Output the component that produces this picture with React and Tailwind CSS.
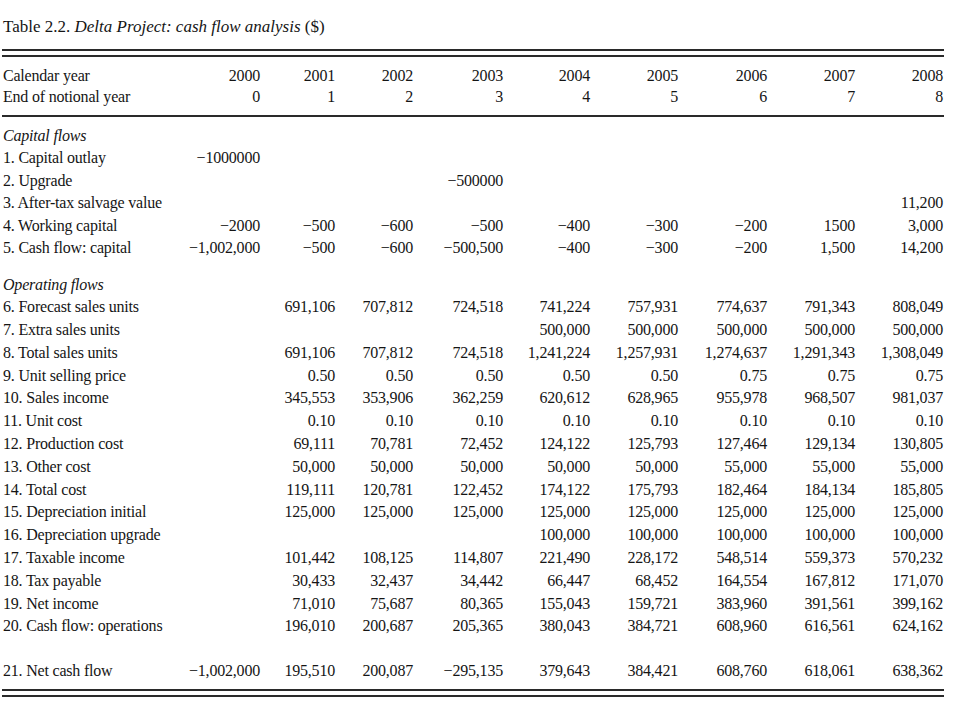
import React from 'react';

const cols = "grid grid-cols-[177px_80px_75px_78px_90px_87px_88px_89px_88px_88px]";

const capital = [
  ["1. Capital outlay", "−1000000", "", "", "", "", "", "", "", ""],
  ["2. Upgrade", "", "", "", "−500000", "", "", "", "", ""],
  ["3. After-tax salvage value", "", "", "", "", "", "", "", "", "11,200"],
  ["4. Working capital", "−2000", "−500", "−600", "−500", "−400", "−300", "−200", "1500", "3,000"],
  ["5. Cash flow: capital", "−1,002,000", "−500", "−600", "−500,500", "−400", "−300", "−200", "1,500", "14,200"],
];

const operating = [
  ["6. Forecast sales units", "", "691,106", "707,812", "724,518", "741,224", "757,931", "774,637", "791,343", "808,049"],
  ["7. Extra sales units", "", "", "", "", "500,000", "500,000", "500,000", "500,000", "500,000"],
  ["8. Total sales units", "", "691,106", "707,812", "724,518", "1,241,224", "1,257,931", "1,274,637", "1,291,343", "1,308,049"],
  ["9. Unit selling price", "", "0.50", "0.50", "0.50", "0.50", "0.50", "0.75", "0.75", "0.75"],
  ["10. Sales income", "", "345,553", "353,906", "362,259", "620,612", "628,965", "955,978", "968,507", "981,037"],
  ["11. Unit cost", "", "0.10", "0.10", "0.10", "0.10", "0.10", "0.10", "0.10", "0.10"],
  ["12. Production cost", "", "69,111", "70,781", "72,452", "124,122", "125,793", "127,464", "129,134", "130,805"],
  ["13. Other cost", "", "50,000", "50,000", "50,000", "50,000", "50,000", "55,000", "55,000", "55,000"],
  ["14. Total cost", "", "119,111", "120,781", "122,452", "174,122", "175,793", "182,464", "184,134", "185,805"],
  ["15. Depreciation initial", "", "125,000", "125,000", "125,000", "125,000", "125,000", "125,000", "125,000", "125,000"],
  ["16. Depreciation upgrade", "", "", "", "", "100,000", "100,000", "100,000", "100,000", "100,000"],
  ["17. Taxable income", "", "101,442", "108,125", "114,807", "221,490", "228,172", "548,514", "559,373", "570,232"],
  ["18. Tax payable", "", "30,433", "32,437", "34,442", "66,447", "68,452", "164,554", "167,812", "171,070"],
  ["19. Net income", "", "71,010", "75,687", "80,365", "155,043", "159,721", "383,960", "391,561", "399,162"],
  ["20. Cash flow: operations", "", "196,010", "200,687", "205,365", "380,043", "384,721", "608,960", "616,561", "624,162"],
];

const net = ["21. Net cash flow", "−1,002,000", "195,510", "200,087", "−295,135", "379,643", "384,421", "608,760", "618,061", "638,362"];

const Row = ({ cells, h }) => (
  <div className={`${cols} ${h}`}>
    {cells.map((c, i) => (
      <div key={i} className={i === 0 ? "text-left whitespace-nowrap" : "text-right whitespace-nowrap"}>{c}</div>
    ))}
  </div>
);

export default function App() {
  return (
    <div className="w-[960px] h-[720px] bg-white text-[#151515] font-['Liberation_Serif',serif] pl-[3px] pt-[16px]">
      <div className="leading-[22px] h-[22px] text-[17px]">
        Table 2.2. <span className="italic">Delta Project: cash flow analysis</span> ($)
      </div>

      <div className="text-[16px] tracking-[-0.2px]">
        <div className="w-[942px] -ml-[1px] mt-[11px] border-t-2 border-[#2a2a2a]" />
        <div className="w-[942px] -ml-[1px] mt-[4px] border-t-2 border-[#2a2a2a]" />

        <div className="mt-[8px] leading-[21px]">
          <Row h="h-[21px]" cells={["Calendar year", "2000", "2001", "2002", "2003", "2004", "2005", "2006", "2007", "2008"]} />
          <Row h="h-[21px]" cells={["End of notional year", "0", "1", "2", "3", "4", "5", "6", "7", "8"]} />
        </div>

        <div className="w-[942px] -ml-[1px] mt-[8px] border-t-2 border-[#2a2a2a]" />

        <div className="mt-[8px] leading-[22.5px]">
          <div className="italic h-[22px] leading-[22px]">Capital flows</div>
          {capital.map((r, i) => <Row key={i} h="h-[22.5px]" cells={r} />)}
        </div>

        <div className="mt-[14px] leading-[22.8px]">
          <div className="italic h-[22.8px]">Operating flows</div>
          {operating.map((r, i) => <Row key={i} h="h-[22.8px]" cells={r} />)}
        </div>

        <div className="mt-[22px] leading-[22.8px]">
          <Row h="h-[22.8px]" cells={net} />
        </div>

        <div className="w-[942px] -ml-[1px] mt-[6px] border-t-2 border-[#2a2a2a]" />
        <div className="w-[942px] -ml-[1px] mt-[4px] border-t-2 border-[#2a2a2a]" />
      </div>
    </div>
  );
}
